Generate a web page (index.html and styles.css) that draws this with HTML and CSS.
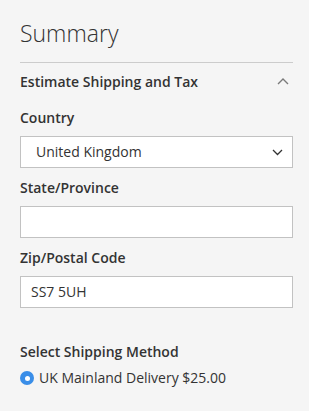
FILE: index.html
```html
<!DOCTYPE html>
<html>
<head>
<meta charset="utf-8">
<link rel="stylesheet" href="styles.css">
</head>
<body>
<div class="summary">
  <h1 class="title">Summary</h1>
  <div class="divider"></div>
  <div class="section-head">
    <span>Estimate Shipping and Tax</span>
    <svg class="chev-up" width="12" height="8" viewBox="0 0 12 8"><path d="M1 7 L6 2 L11 7" fill="none" stroke="#7a7a7a" stroke-width="1.4"/></svg>
  </div>
  <label class="label first">Country</label>
  <div class="select">
    <span>United Kingdom</span>
    <svg class="chev-down" width="11" height="7" viewBox="0 0 11 7"><path d="M1 1 L5.5 5.5 L10 1" fill="none" stroke="#333" stroke-width="1.3"/></svg>
  </div>
  <label class="label">State/Province</label>
  <div class="input"></div>
  <label class="label">Zip/Postal Code</label>
  <div class="input text">SS7 5UH</div>
  <div class="label method">Select Shipping Method</div>
  <div class="radio-row">
    <span class="radio"><span class="dot"></span></span>
    <span>UK Mainland Delivery $25.00</span>
  </div>
</div>
</body>
</html>
```
FILE: styles.css
```css
html, body {
  margin: 0;
  padding: 0;
  background: #f5f5f5;
}
body {
  font-family: "Open Sans", "Liberation Sans", sans-serif;
  color: #333;
}
.summary {
  display: flex;
  flex-direction: column;
  padding: 17px 16px 0 20px;
}
.title {
  margin: 0;
  font-size: 23px;
  font-weight: 300;
  line-height: 32px;
  height: 33px;
}
.divider {
  margin-top: 12px;
  height: 1px;
  background: #cccccc;
}
.section-head {
  margin-top: 9px;
  display: flex;
  align-items: center;
  justify-content: space-between;
  font-size: 14px;
  font-weight: 600;
  line-height: 20px;
  height: 20px;
}
.chev-up {
  margin-right: 4px;
  margin-top: -2px;
}
.label {
  display: block;
  margin-top: 10px;
  font-size: 14px;
  font-weight: 600;
  line-height: 20px;
  height: 20px;
}
.label.first {
  margin-top: 16px;
}
.label.method {
  margin-top: 34px;
}
.select, .input {
  margin-top: 8px;
  box-sizing: border-box;
  height: 32px;
  background: #fff;
  border: 1px solid #c2c2c2;
  font-size: 14px;
  line-height: 30px;
}
.select {
  display: flex;
  align-items: center;
  justify-content: space-between;
  padding: 0 9px 0 15px;
}
.chev-down {
  margin-top: 1px;
}
.input.text {
  padding-left: 10px;
}
.radio-row {
  margin-top: 6px;
  display: flex;
  align-items: center;
  gap: 5px;
  font-size: 14px;
  line-height: 20px;
  height: 20px;
}
.radio {
  width: 14px;
  height: 14px;
  border-radius: 50%;
  background: #3a8ee8;
  display: flex;
  align-items: center;
  justify-content: center;
}
.dot {
  width: 5px;
  height: 5px;
  border-radius: 50%;
  background: #fff;
}
```
